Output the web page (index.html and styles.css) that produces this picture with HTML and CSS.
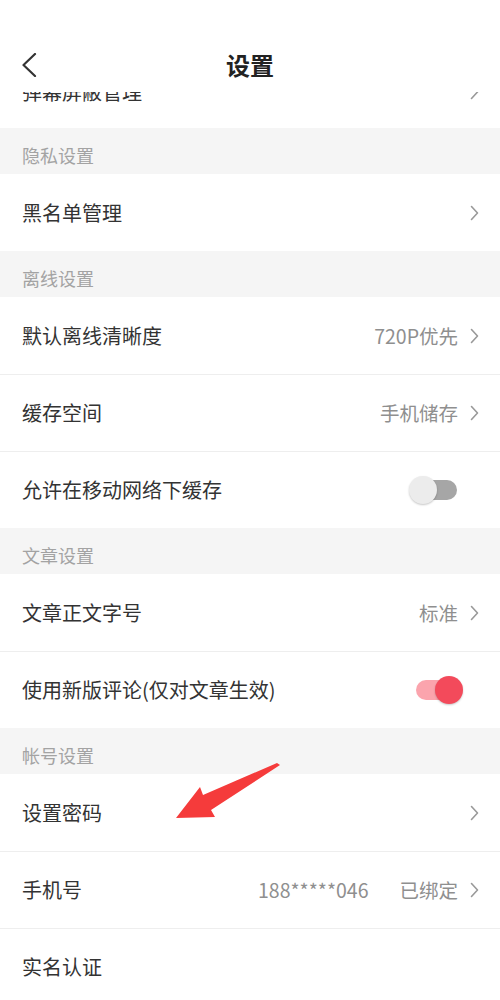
FILE: index.html
```html
<!DOCTYPE html>
<html lang="zh-CN">
<head>
<meta charset="utf-8">
<title>设置</title>
<link rel="stylesheet" href="styles.css">
</head>
<body>
<div class="screen">
  <header class="header">
    <svg class="back" width="16" height="24" viewBox="0 0 16 24"><path d="M14 1 L2.5 12 L14 23" fill="none" stroke="#333" stroke-width="2.2" stroke-linecap="round" stroke-linejoin="round"/></svg>
    <div class="title">设置</div>
  </header>

  <div class="row partial">
    <div class="partial-inner">
      <span class="label">弹幕屏蔽管理</span>
      <svg class="chev" width="9" height="16" viewBox="0 0 9 16"><path d="M1.5 1.5 L7.5 8 L1.5 14.5" fill="none" stroke="#999" stroke-width="1.6" stroke-linecap="round" stroke-linejoin="round"/></svg>
    </div>
  </div>

  <div class="section">隐私设置</div>
  <div class="group">
    <div class="row"><span class="label">黑名单管理</span><span class="right"><svg class="chev" width="9" height="16" viewBox="0 0 9 16"><path d="M1.5 1.5 L7.5 8 L1.5 14.5" fill="none" stroke="#999" stroke-width="1.6" stroke-linecap="round" stroke-linejoin="round"/></svg></span></div>
  </div>

  <div class="section">离线设置</div>
  <div class="group">
    <div class="row"><span class="label">默认离线清晰度</span><span class="right"><span class="value">720P优先</span><svg class="chev" width="9" height="16" viewBox="0 0 9 16"><path d="M1.5 1.5 L7.5 8 L1.5 14.5" fill="none" stroke="#999" stroke-width="1.6" stroke-linecap="round" stroke-linejoin="round"/></svg></span></div>
    <div class="row"><span class="label">缓存空间</span><span class="right"><span class="value">手机储存</span><svg class="chev" width="9" height="16" viewBox="0 0 9 16"><path d="M1.5 1.5 L7.5 8 L1.5 14.5" fill="none" stroke="#999" stroke-width="1.6" stroke-linecap="round" stroke-linejoin="round"/></svg></span></div>
    <div class="row toggle-row"><span class="label">允许在移动网络下缓存</span><span class="toggle off"><span class="track"></span><span class="knob"></span></span></div>
  </div>

  <div class="section">文章设置</div>
  <div class="group">
    <div class="row"><span class="label">文章正文字号</span><span class="right"><span class="value">标准</span><svg class="chev" width="9" height="16" viewBox="0 0 9 16"><path d="M1.5 1.5 L7.5 8 L1.5 14.5" fill="none" stroke="#999" stroke-width="1.6" stroke-linecap="round" stroke-linejoin="round"/></svg></span></div>
    <div class="row toggle-row"><span class="label">使用新版评论(仅对文章生效)</span><span class="toggle on"><span class="track"></span><span class="knob"></span></span></div>
  </div>

  <div class="section">帐号设置</div>
  <div class="group">
    <div class="row"><span class="label">设置密码</span><span class="right"><svg class="chev" width="9" height="16" viewBox="0 0 9 16"><path d="M1.5 1.5 L7.5 8 L1.5 14.5" fill="none" stroke="#999" stroke-width="1.6" stroke-linecap="round" stroke-linejoin="round"/></svg></span></div>
    <div class="row"><span class="label">手机号</span><span class="right"><span class="value phone">188*****046</span><span class="value">已绑定</span><svg class="chev" width="9" height="16" viewBox="0 0 9 16"><path d="M1.5 1.5 L7.5 8 L1.5 14.5" fill="none" stroke="#999" stroke-width="1.6" stroke-linecap="round" stroke-linejoin="round"/></svg></span></div>
    <div class="row"><span class="label">实名认证</span></div>
  </div>

  <svg class="annot" width="500" height="1000" viewBox="0 0 500 1000">
    <polygon points="176,818 200,787 203,795 277,763 280,765 211,810 215,817" fill="#f53b3b"/>
  </svg>
</div>
</body>
</html>
```
FILE: styles.css
```css
html, body {
  margin: 0;
  padding: 0;
  background: #fff;
}
body {
  font-family: "Noto Sans CJK SC", "Noto Sans", sans-serif;
  color: #333;
}
.screen {
  position: relative;
  width: 500px;
  height: 1000px;
  overflow: hidden;
  background: #fff;
}
.header {
  height: 92px;
  box-sizing: border-box;
  padding-top: 48px;
  display: flex;
  align-items: flex-start;
  position: relative;
  background: #fff;
}
.back {
  display: block;
  margin-left: 21px;
  margin-top: 5px;
}
.title {
  position: absolute;
  left: 0;
  right: 0;
  top: 48px;
  text-align: center;
  font-size: 24px;
  line-height: 34px;
  font-weight: 700;
  color: #222;
}
.section {
  height: 46px;
  box-sizing: border-box;
  padding: 8px 0 0 22px;
  display: flex;
  align-items: center;
  background: #f5f5f5;
  color: #a3a3a3;
  font-size: 18px;
}
.group {
  display: flex;
  flex-direction: column;
}
.row {
  height: 77px;
  box-sizing: border-box;
  display: flex;
  align-items: center;
  justify-content: space-between;
  padding: 0 21px 0 22px;
}
.row + .row {
  border-top: 1px solid #eeeeee;
}
.label {
  font-size: 20px;
  color: #333;
  line-height: 24px;
}
.right {
  display: flex;
  align-items: center;
}
.value {
  font-size: 19.5px;
  color: #8f8f8f;
  margin-right: 12px;
  line-height: 24px;
}
.value.phone {
  margin-right: 31px;
}
.chev {
  display: block;
}
.partial {
  height: 36px;
  overflow: hidden;
  align-items: flex-start;
  display: block;
  padding: 0;
}
.partial-inner {
  display: flex;
  align-items: center;
  justify-content: space-between;
  padding: 0 21px 0 22px;
  margin-top: -20px;
  height: 40px;
}
.toggle-row {
  padding-right: 37px;
}
.toggle {
  position: relative;
  width: 54px;
  height: 28px;
  display: block;
}
.track {
  position: absolute;
  left: 7px;
  right: 6px;
  top: 4px;
  height: 20px;
  border-radius: 10px;
}
.knob {
  position: absolute;
  top: 0;
  width: 28px;
  height: 28px;
  border-radius: 50%;
  box-shadow: 0 1px 2px rgba(0,0,0,0.22);
}
.toggle.off .track { background: #a6a6a6; }
.toggle.off .knob { left: 0; background: #ececec; }
.toggle.on .track { background: #fba4ad; }
.toggle.on .knob { left: 26px; background: #f34a5b; }
.annot {
  position: absolute;
  left: 0;
  top: 0;
  pointer-events: none;
}
```
